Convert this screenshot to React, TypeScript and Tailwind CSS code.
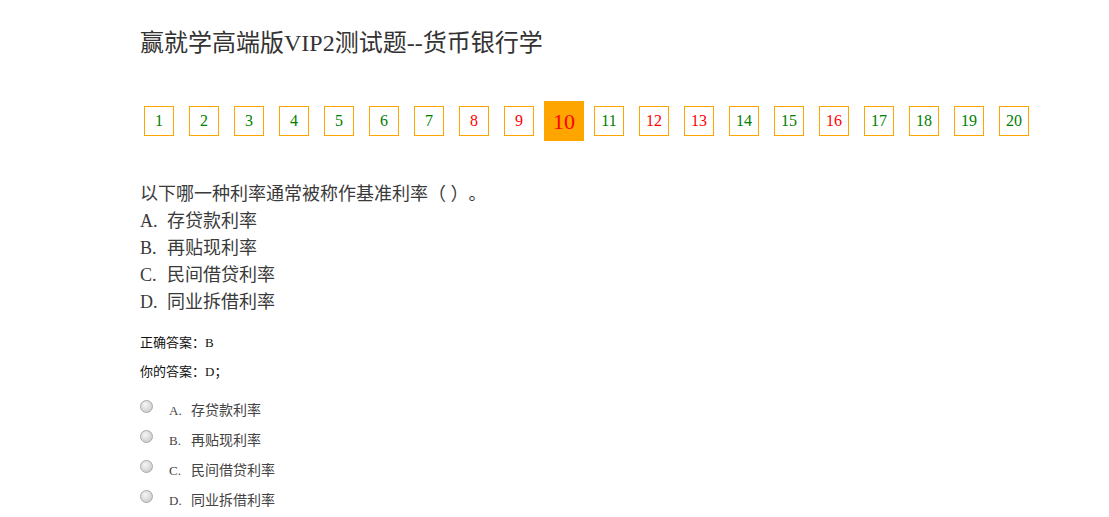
import React from 'react'

const font = { fontFamily: '"Liberation Serif", "Noto Sans CJK SC", serif' }

type Num = { n: number; color: 'green' | 'red' }

const nums: Num[] = [
  { n: 1, color: 'green' },
  { n: 2, color: 'green' },
  { n: 3, color: 'green' },
  { n: 4, color: 'green' },
  { n: 5, color: 'green' },
  { n: 6, color: 'green' },
  { n: 7, color: 'green' },
  { n: 8, color: 'red' },
  { n: 9, color: 'red' },
  { n: 10, color: 'red' },
  { n: 11, color: 'green' },
  { n: 12, color: 'red' },
  { n: 13, color: 'red' },
  { n: 14, color: 'green' },
  { n: 15, color: 'green' },
  { n: 16, color: 'red' },
  { n: 17, color: 'green' },
  { n: 18, color: 'green' },
  { n: 19, color: 'green' },
  { n: 20, color: 'green' },
]

const options = [
  { key: 'A', text: '存贷款利率' },
  { key: 'B', text: '再贴现利率' },
  { key: 'C', text: '民间借贷利率' },
  { key: 'D', text: '同业拆借利率' },
]

const current = 10

export default function App() {
  return (
    <div className="min-h-screen bg-white pl-[140px] pt-[28px] [text-spacing-trim:space-all]" style={font}>
      <h1 className="text-[24px] leading-[30px] font-normal text-[#333333]">
        赢就学高端版VIP2测试题--货币银行学
      </h1>

      <div className="mt-[43px] ml-[4px] flex items-center gap-[15px]">
        {nums.map((item) =>
          item.n === current ? (
            <div
              key={item.n}
              className="-mx-[5px] flex h-[40px] w-[40px] items-center justify-center bg-[#ffa500] text-[22px] text-[#ff0000]"
            >
              {item.n}
            </div>
          ) : (
            <div
              key={item.n}
              className={
                'flex h-[30px] w-[30px] items-center justify-center border border-[#ffa500] text-[16px] ' +
                (item.color === 'red' ? 'text-[#ff0000]' : 'text-[#008000]')
              }
            >
              {item.n}
            </div>
          )
        )}
      </div>

      <div className="mt-[40px] text-[18px] leading-[27px] text-[#3a3a3a]">
        <p>以下哪一种利率通常被称作基准利率（ ）。</p>
        {options.map((o) => (
          <p key={o.key} className="flex">
            <span className="inline-block w-[27px]">{o.key}.</span>
            <span>{o.text}</span>
          </p>
        ))}
      </div>

      <div className="mt-[12px] text-[13px] leading-[29px] text-[#111111]">
        <p>正确答案：B</p>
        <p>你的答案：D；</p>
      </div>

      <div className="mt-[10px] text-[14px] leading-[30px] text-[#444444]">
        {options.map((o) => (
          <label key={o.key} className="flex items-center">
            <span className="-mt-[10px] inline-block h-[13px] w-[13px] rounded-full border border-[#a8a8a8] bg-[radial-gradient(circle_at_40%_35%,#f6f6f6,#c2c2c2)]" />
            <span className="ml-[16px] inline-block w-[22px] text-[13px]">{o.key}.</span>
            <span>{o.text}</span>
          </label>
        ))}
      </div>
    </div>
  )
}
